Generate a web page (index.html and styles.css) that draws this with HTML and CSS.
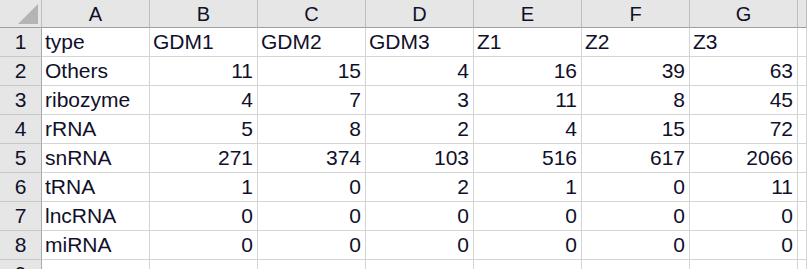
FILE: index.html
```html
<!DOCTYPE html>
<html lang="en">
<head>
<meta charset="utf-8">
<title>Sheet1</title>
<link rel="stylesheet" href="styles.css">
</head>
<body>
<div class="sheet">
  <div class="corner"><span class="corner-mark"></span></div>
  <div class="col-head">A</div>
  <div class="col-head">B</div>
  <div class="col-head">C</div>
  <div class="col-head">D</div>
  <div class="col-head">E</div>
  <div class="col-head">F</div>
  <div class="col-head">G</div>
  <div class="col-head"></div>

  <div class="row-head">1</div>
  <div class="cell">type</div>
  <div class="cell">GDM1</div>
  <div class="cell">GDM2</div>
  <div class="cell">GDM3</div>
  <div class="cell">Z1</div>
  <div class="cell">Z2</div>
  <div class="cell">Z3</div>
  <div class="cell"></div>

  <div class="row-head">2</div>
  <div class="cell">Others</div>
  <div class="cell num">11</div>
  <div class="cell num">15</div>
  <div class="cell num">4</div>
  <div class="cell num">16</div>
  <div class="cell num">39</div>
  <div class="cell num">63</div>
  <div class="cell"></div>

  <div class="row-head">3</div>
  <div class="cell">ribozyme</div>
  <div class="cell num">4</div>
  <div class="cell num">7</div>
  <div class="cell num">3</div>
  <div class="cell num">11</div>
  <div class="cell num">8</div>
  <div class="cell num">45</div>
  <div class="cell"></div>

  <div class="row-head">4</div>
  <div class="cell">rRNA</div>
  <div class="cell num">5</div>
  <div class="cell num">8</div>
  <div class="cell num">2</div>
  <div class="cell num">4</div>
  <div class="cell num">15</div>
  <div class="cell num">72</div>
  <div class="cell"></div>

  <div class="row-head">5</div>
  <div class="cell">snRNA</div>
  <div class="cell num">271</div>
  <div class="cell num">374</div>
  <div class="cell num">103</div>
  <div class="cell num">516</div>
  <div class="cell num">617</div>
  <div class="cell num">2066</div>
  <div class="cell"></div>

  <div class="row-head">6</div>
  <div class="cell">tRNA</div>
  <div class="cell num">1</div>
  <div class="cell num">0</div>
  <div class="cell num">2</div>
  <div class="cell num">1</div>
  <div class="cell num">0</div>
  <div class="cell num">11</div>
  <div class="cell"></div>

  <div class="row-head">7</div>
  <div class="cell">lncRNA</div>
  <div class="cell num">0</div>
  <div class="cell num">0</div>
  <div class="cell num">0</div>
  <div class="cell num">0</div>
  <div class="cell num">0</div>
  <div class="cell num">0</div>
  <div class="cell"></div>

  <div class="row-head">8</div>
  <div class="cell">miRNA</div>
  <div class="cell num">0</div>
  <div class="cell num">0</div>
  <div class="cell num">0</div>
  <div class="cell num">0</div>
  <div class="cell num">0</div>
  <div class="cell num">0</div>
  <div class="cell"></div>

  <div class="row-head">9</div>
  <div class="cell"></div>
  <div class="cell"></div>
  <div class="cell"></div>
  <div class="cell"></div>
  <div class="cell"></div>
  <div class="cell"></div>
  <div class="cell"></div>
  <div class="cell"></div>
</div>
</body>
</html>
```
FILE: styles.css
```css
html, body {
  margin: 0;
  padding: 0;
  background: #ffffff;
  overflow: hidden;
}

.sheet {
  display: grid;
  width: 100%;
  height: 269px;
  overflow: hidden;
  grid-template-columns: 42px repeat(7, 108px) 1fr;
  grid-template-rows: 28px repeat(9, 29px);
  font-family: "Liberation Sans", Arial, sans-serif;
  font-size: 21px;
  color: #10102a;
}

.corner,
.col-head,
.row-head {
  background: #e6e6e6;
  box-sizing: border-box;
}

.corner {
  position: relative;
  border-right: 1px solid #bdbdbd;
  border-bottom: 1px solid #9e9e9e;
}

/* select-all triangle in the top-left corner */
.corner-mark {
  position: absolute;
  right: 3px;
  bottom: 3px;
  width: 0;
  height: 0;
  border-left: 20px solid transparent;
  border-bottom: 20px solid #b4b4b4;
}

.col-head {
  display: flex;
  align-items: center;
  justify-content: center;
  border-right: 1px solid #bdbdbd;
  border-bottom: 1px solid #9e9e9e;
  padding-top: 1px;
  font-size: 20px;
}

.row-head {
  display: flex;
  align-items: flex-end;
  justify-content: center;
  padding-bottom: 2px;
  border-right: 1px solid #a9a9a9;
  border-bottom: 1px solid #c8c8c8;
}

.cell {
  box-sizing: border-box;
  display: flex;
  align-items: flex-end;
  padding: 0 4px 2px 3px;
  border-right: 1px solid #d4d4d4;
  border-bottom: 1px solid #d4d4d4;
  white-space: nowrap;
  overflow: hidden;
}

.num {
  justify-content: flex-end;
}
```
